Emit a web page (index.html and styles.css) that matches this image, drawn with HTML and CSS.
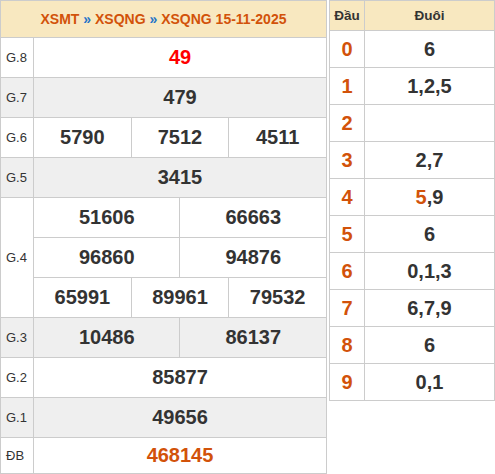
FILE: index.html
```html
<!DOCTYPE html>
<html>
<head>
<meta charset="utf-8">
<link rel="stylesheet" href="styles.css">
</head>
<body>
<div class="wrap">
  <table class="kq">
    <colgroup>
      <col class="c-lbl">
      <col span="6">
    </colgroup>
    <tr class="head">
      <th colspan="7"><span class="lnk">XSMT</span> <span class="sep">»</span> <span class="lnk">XSQNG</span> <span class="sep">»</span> <span class="lnk">XSQNG 15-11-2025</span></th>
    </tr>
    <tr>
      <td class="lbl">G.8</td>
      <td colspan="6" class="n red">49</td>
    </tr>
    <tr class="alt">
      <td class="lbl">G.7</td>
      <td colspan="6" class="n">479</td>
    </tr>
    <tr>
      <td class="lbl">G.6</td>
      <td colspan="2" class="n">5790</td>
      <td colspan="2" class="n">7512</td>
      <td colspan="2" class="n">4511</td>
    </tr>
    <tr class="alt">
      <td class="lbl">G.5</td>
      <td colspan="6" class="n">3415</td>
    </tr>
    <tr>
      <td class="lbl" rowspan="3">G.4</td>
      <td colspan="3" class="n">51606</td>
      <td colspan="3" class="n">66663</td>
    </tr>
    <tr>
      <td colspan="3" class="n">96860</td>
      <td colspan="3" class="n">94876</td>
    </tr>
    <tr>
      <td colspan="2" class="n">65991</td>
      <td colspan="2" class="n">89961</td>
      <td colspan="2" class="n">79532</td>
    </tr>
    <tr class="alt">
      <td class="lbl">G.3</td>
      <td colspan="3" class="n">10486</td>
      <td colspan="3" class="n">86137</td>
    </tr>
    <tr>
      <td class="lbl">G.2</td>
      <td colspan="6" class="n">85877</td>
    </tr>
    <tr class="alt">
      <td class="lbl">G.1</td>
      <td colspan="6" class="n">49656</td>
    </tr>
    <tr class="last">
      <td class="lbl">ĐB</td>
      <td colspan="6" class="n db">468145</td>
    </tr>
  </table>

  <table class="lt">
    <colgroup>
      <col class="c-dau">
      <col>
    </colgroup>
    <tr class="head">
      <th>Đầu</th>
      <th>Đuôi</th>
    </tr>
    <tr><td class="d">0</td><td class="v">6</td></tr>
    <tr><td class="d">1</td><td class="v">1,2,5</td></tr>
    <tr><td class="d">2</td><td class="v"></td></tr>
    <tr><td class="d">3</td><td class="v">2,7</td></tr>
    <tr><td class="d">4</td><td class="v"><span class="hl">5</span>,9</td></tr>
    <tr><td class="d">5</td><td class="v">6</td></tr>
    <tr><td class="d">6</td><td class="v">0,1,3</td></tr>
    <tr><td class="d">7</td><td class="v">6,7,9</td></tr>
    <tr><td class="d">8</td><td class="v">6</td></tr>
    <tr><td class="d">9</td><td class="v">0,1</td></tr>
  </table>
</div>
</body>
</html>
```

FILE: styles.css
```css
html, body {
  margin: 0;
  padding: 0;
  background: #fff;
}
body {
  font-family: "Liberation Sans", Arial, sans-serif;
  color: #333;
}
.wrap {
  display: flex;
  align-items: flex-start;
  gap: 2px;
}
table {
  border-collapse: collapse;
  table-layout: fixed;
}
td, th {
  border: 1px solid #ccc;
  padding: 0;
}
.kq {
  width: 327px;
}
.kq .c-lbl {
  width: 33px;
}
.kq .head th {
  height: 36px;
  background: #f8e8c0;
  font-size: 14px;
  font-weight: bold;
  text-align: center;
  color: #d2520a;
}
.kq .sep {
  color: #2474c8;
}
.kq tr {
  height: 40px;
}
.kq tr.head {
  height: 37px;
}
.kq tr.last {
  height: 36px;
}
.kq tr.alt td {
  background: #efefef;
}
.lbl {
  font-size: 13px;
  text-align: left;
  padding-left: 5px;
  color: #333;
}
.n {
  font-size: 20px;
  font-weight: bold;
  text-align: center;
  color: #333;
}
.n.red {
  color: #f00;
}
.n.db {
  color: #d2520a;
}
.lt {
  width: 166px;
}
.lt .c-dau {
  width: 35px;
}
.lt tr {
  height: 37px;
}
.lt tr.head {
  height: 30px;
}
.lt .head th {
  background: #f8e8c0;
  font-size: 13.5px;
  font-weight: bold;
  color: #333;
  text-align: center;
}
.lt .d {
  font-size: 20px;
  font-weight: bold;
  color: #d2520a;
  text-align: center;
}
.lt .v {
  font-size: 20px;
  font-weight: bold;
  color: #333;
  text-align: center;
}
.lt .hl {
  color: #d2520a;
}
```
